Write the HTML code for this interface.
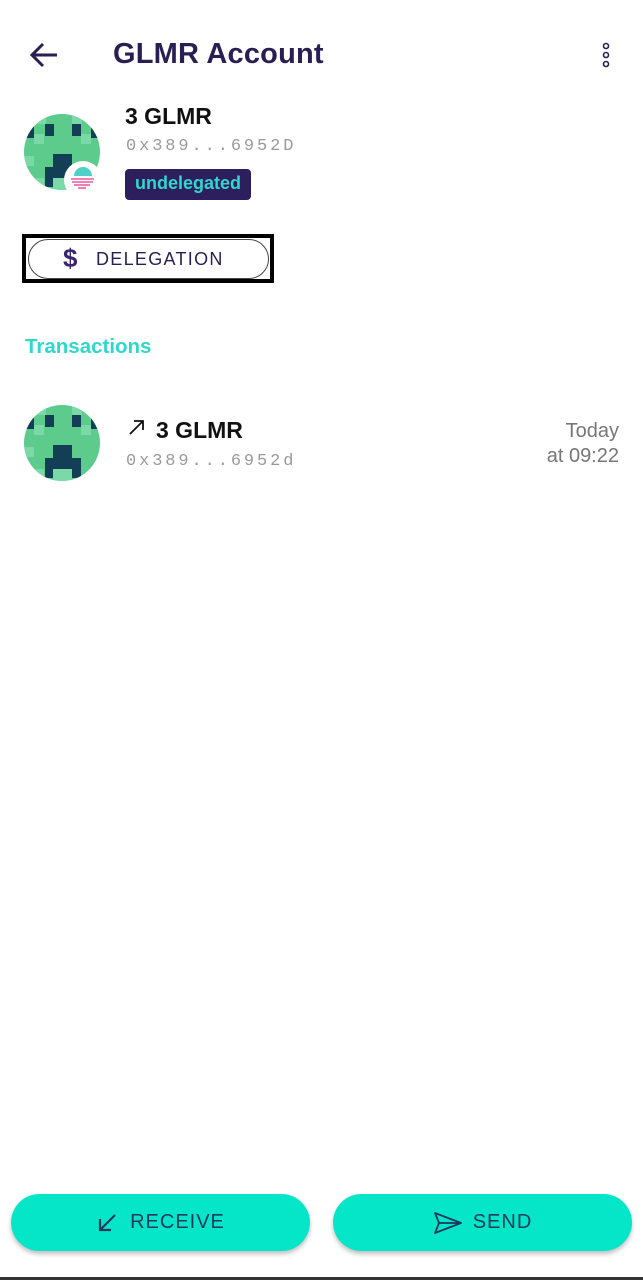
<!DOCTYPE html>
<html><head><meta charset="utf-8"><style>
*{margin:0;padding:0;box-sizing:border-box}
body{width:643px;height:1280px;background:#fff;font-family:"Liberation Sans",sans-serif;position:relative;overflow:hidden}
.abs{position:absolute}
.mono{font-family:"Liberation Mono",monospace;color:#9a9a9a}
.btn{position:absolute;top:1194px;height:57px;width:299px;border-radius:29px;background:#05e6c8;box-shadow:0 3px 5px rgba(0,0,0,.25);display:flex;align-items:center;justify-content:center;color:#1a3a5c;font-size:20px;letter-spacing:1px;font-weight:500}
</style></head><body>
<svg class="abs" style="left:28px;top:41px" width="32" height="28" viewBox="0 0 32 28"><path d="M29 14H4M15 3L4 14l11 11" fill="none" stroke="#2a1f52" stroke-width="3"/></svg>
<div class="abs" style="left:113px;top:38px;font-size:29px;color:#2a1f52;font-weight:bold;letter-spacing:0.2px">GLMR Account</div>
<svg class="abs" style="left:600px;top:42px" width="12" height="28"><circle cx="6" cy="4" r="2.5" fill="none" stroke="#2a1f52" stroke-width="1.6"/><circle cx="6" cy="13" r="2.5" fill="none" stroke="#2a1f52" stroke-width="1.6"/><circle cx="6" cy="22" r="2.5" fill="none" stroke="#2a1f52" stroke-width="1.6"/></svg>

<svg class="abs" style="left:24px;top:114px" width="78" height="78" viewBox="0 0 78 78">
<defs><clipPath id="c"><circle cx="38" cy="38" r="38"/></clipPath></defs>
<g clip-path="url(#c)">
<rect width="78" height="78" fill="#5ccb8c"/>
<rect x="12" y="0" width="10" height="10" fill="#7ad9a6"/><rect x="48" y="0" width="10" height="10" fill="#7ad9a6"/>
<rect x="0" y="12" width="10" height="12" fill="#133f56"/><rect x="21" y="10" width="9" height="12" fill="#133f56"/><rect x="48" y="10" width="9" height="12" fill="#133f56"/><rect x="67" y="12" width="10" height="12" fill="#133f56"/>
<rect x="10" y="20" width="10" height="10" fill="#7ad9a6"/><rect x="57" y="20" width="10" height="10" fill="#7ad9a6"/>
<rect x="29" y="40" width="19" height="24" fill="#133f56"/><rect x="21" y="53" width="9" height="20" fill="#133f56"/><rect x="48" y="53" width="9" height="20" fill="#133f56"/>
<rect x="0" y="42" width="10" height="10" fill="#7ad9a6"/><rect x="10" y="64" width="10" height="10" fill="#7ad9a6"/><rect x="29" y="64" width="19" height="14" fill="#7ad9a6"/>
</g>
<circle cx="59" cy="66" r="19" fill="#fff"/>
<path d="M50 62a9 9 0 0 1 18 0z" fill="#4fd0c8"/>
<g stroke="#e8368f" stroke-width="1.3"><line x1="47" y1="65" x2="70" y2="65"/><line x1="48" y1="68" x2="69" y2="68"/><line x1="50" y1="71" x2="66" y2="71"/><line x1="54" y1="74" x2="62" y2="74"/></g>
</svg>

<div class="abs" style="left:125px;top:103px;font-size:23px;font-weight:bold;color:#111">3 GLMR</div>
<div class="abs mono" style="left:126px;top:137px;font-size:17px;letter-spacing:2.9px">0x389...6952D</div>
<div class="abs" style="left:125px;top:169px;width:126px;height:31px;background:#2d1f5e;border-radius:4px;color:#2fd8cc;font-size:18px;font-weight:bold;text-align:center;line-height:29px">undelegated</div>

<div class="abs" style="left:22px;top:234px;width:252px;height:49px;border:4px solid #000"></div>
<div class="abs" style="left:28px;top:239px;width:241px;height:40px;border:1px solid #444;border-radius:20px"></div>
<div class="abs" style="left:63px;top:243px;font-size:26px;font-weight:bold;color:#3a2470">$</div>
<div class="abs" style="left:96px;top:249px;font-size:18px;letter-spacing:1.3px;color:#2a1f52">DELEGATION</div>

<div class="abs" style="left:25px;top:335px;font-size:20.5px;font-weight:bold;color:#2fd8cc">Transactions</div>

<svg class="abs" style="left:24px;top:405px" width="78" height="78" viewBox="0 0 78 78">
<defs><clipPath id="c2"><circle cx="38" cy="38" r="38"/></clipPath></defs>
<g clip-path="url(#c2)">
<rect width="78" height="78" fill="#5ccb8c"/>
<rect x="12" y="0" width="10" height="10" fill="#7ad9a6"/><rect x="48" y="0" width="10" height="10" fill="#7ad9a6"/>
<rect x="0" y="12" width="10" height="12" fill="#133f56"/><rect x="21" y="10" width="9" height="12" fill="#133f56"/><rect x="48" y="10" width="9" height="12" fill="#133f56"/><rect x="67" y="12" width="10" height="12" fill="#133f56"/>
<rect x="10" y="20" width="10" height="10" fill="#7ad9a6"/><rect x="57" y="20" width="10" height="10" fill="#7ad9a6"/>
<rect x="29" y="40" width="19" height="24" fill="#133f56"/><rect x="21" y="53" width="9" height="20" fill="#133f56"/><rect x="48" y="53" width="9" height="20" fill="#133f56"/>
<rect x="0" y="42" width="10" height="10" fill="#7ad9a6"/><rect x="10" y="64" width="10" height="10" fill="#7ad9a6"/><rect x="29" y="64" width="19" height="14" fill="#7ad9a6"/>
</g></svg>
<svg class="abs" style="left:128px;top:418px" width="18" height="18"><path d="M2 16L15 3M6 3h9v9" fill="none" stroke="#111" stroke-width="1.8"/></svg>
<div class="abs" style="left:156px;top:417px;font-size:23px;font-weight:bold;color:#111">3 GLMR</div>
<div class="abs mono" style="left:126px;top:452px;font-size:17px;letter-spacing:2.9px">0x389...6952d</div>
<div class="abs" style="right:24px;top:419px;font-size:20px;color:#777;text-align:right;line-height:25px">Today<br>at 09:22</div>

<div class="btn" style="left:11px"><svg width="22" height="22" style="margin-right:12px"><path d="M19 3L4 18M4 7v11h11" fill="none" stroke="#1a3a5c" stroke-width="2.2"/></svg>RECEIVE</div>
<div class="btn" style="left:333px"><svg width="30" height="24" style="margin-right:10px"><path d="M2 2L28 12L2 22L6 12Z M6 12H28" fill="none" stroke="#1a3a5c" stroke-width="1.8" stroke-linejoin="round"/></svg>SEND</div>
<div class="abs" style="left:0;top:1277px;width:643px;height:3px;background:#333"></div>
</body></html>
